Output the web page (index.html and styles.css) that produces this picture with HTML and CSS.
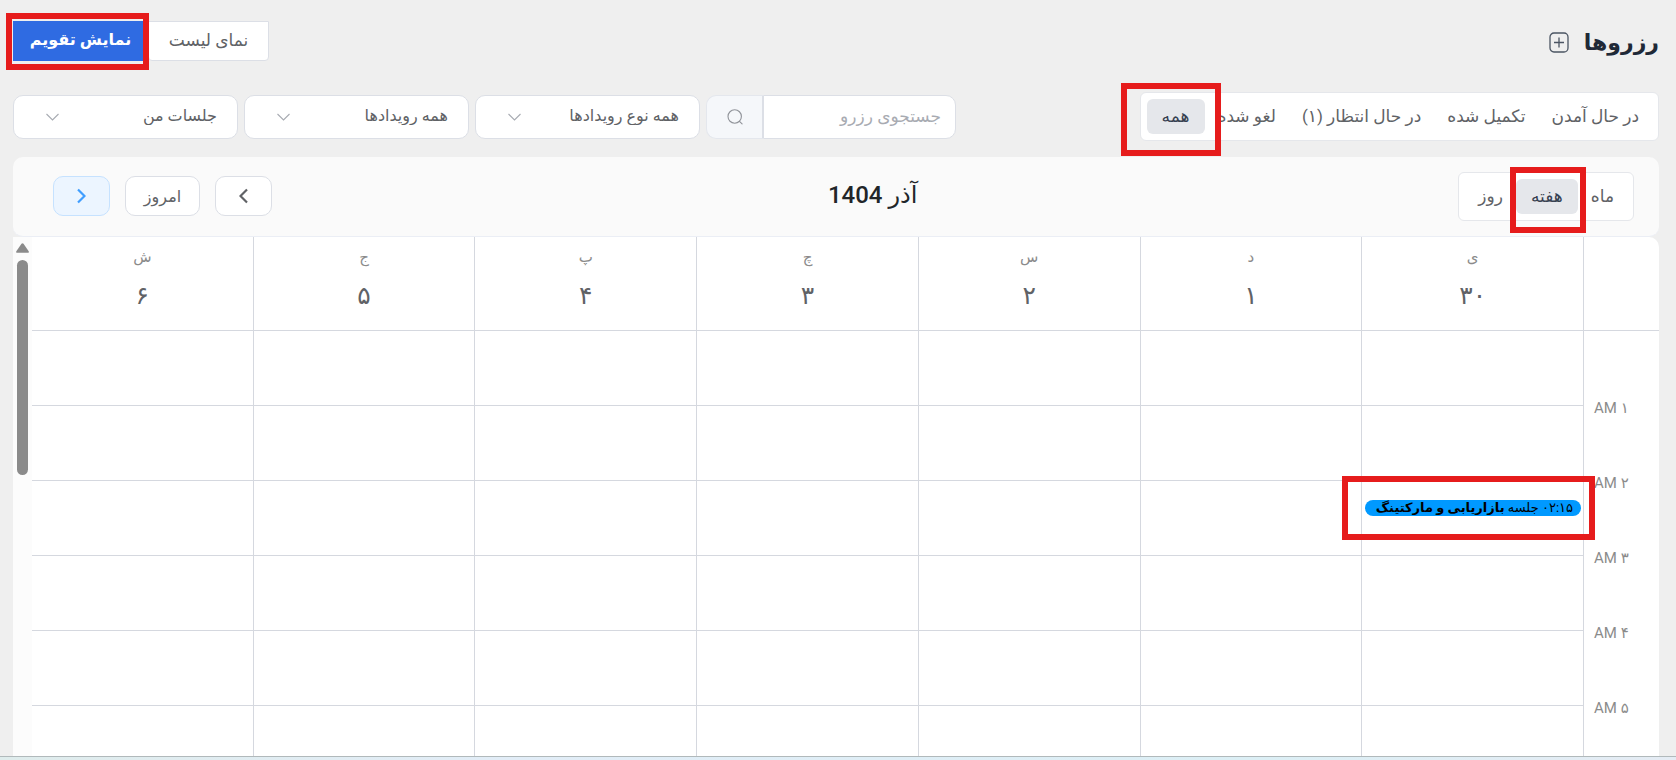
FILE: index.html
```html
<!DOCTYPE html>
<html lang="fa" dir="rtl">
<head>
    <meta charset="UTF-8">
    <meta name="viewport" content="width=device-width, initial-scale=1.0">
    <title>رزروها</title>
    <link rel="stylesheet" href="styles.css">
</head>
<body>
    <div class="page">
        <header class="page-header">
            <div class="page-title">
                <h1>رزروها</h1>
                <button class="add-button" aria-label="+">
                    <svg width="20" height="21" viewBox="0 0 20 21" fill="none">
                        <rect x="1" y="1" width="18" height="19" rx="4" stroke="#4b5563" stroke-width="1.3"/>
                        <path d="M10 5.5v10M5 10.5h10" stroke="#4b5563" stroke-width="1.3"/>
                    </svg>
                </button>
            </div>
            <div class="view-switch">
                <button class="view-button">نمای لیست</button>
                <div class="marked mark-view">
                    <button class="view-button primary">نمایش تقویم</button>
                </div>
            </div>
        </header>

        <div class="filters">
            <nav class="segment status-tabs">
                <button>در حال آمدن</button>
                <button>تکمیل شده</button>
                <button>در حال انتظار (۱)</button>
                <button>لغو شده</button>
                <div class="marked mark-status"><button class="active">همه</button></div>
            </nav>
            <div class="filter-fields">
                <div class="search">
                    <input type="text" placeholder="جستجوی رزرو" aria-label="جستجوی رزرو">
                    <button aria-label="جستجوی رزرو">
                        <svg width="16" height="16" viewBox="0 0 16 16" fill="none" stroke="#909399" stroke-width="1.1" stroke-linecap="round">
                            <circle cx="7.7" cy="7.5" r="6.7"/>
                            <path d="M12.5 12.3l2.6 2.6"/>
                        </svg>
                    </button>
                </div>
                <select aria-label="همه نوع رویدادها"><option>همه نوع رویدادها</option></select>
                <select aria-label="همه رویدادها"><option>همه رویدادها</option></select>
                <select aria-label="جلسات من"><option>جلسات من</option></select>
            </div>
        </div>

        <div class="calendar-bar">
            <div class="segment range-tabs">
                <button>ماه</button>
                <div class="marked mark-week"><button class="active">هفته</button></div>
                <button>روز</button>
            </div>
            <h2>آذر 1404</h2>
            <div class="calendar-nav">
                <button class="nav-arrow" aria-label="‹">
                    <svg width="9" height="16" viewBox="0 0 9 16" fill="none" stroke="#606266" stroke-width="2.2"><path d="M8 1.5L1.5 8L8 14.5"/></svg>
                </button>
                <button class="nav-today">امروز</button>
                <button class="nav-arrow next" aria-label="›">
                    <svg width="9" height="16" viewBox="0 0 9 16" fill="none" stroke="#409eff" stroke-width="2.2"><path d="M1 1.5L7.5 8L1 14.5"/></svg>
                </button>
            </div>
        </div>

        <main class="calendar">
            <div class="week">
                <div class="row days">
                    <div class="time"></div>
                    <div class="cell"><span>ی</span><b>۳۰</b></div>
                    <div class="cell"><span>د</span><b>۱</b></div>
                    <div class="cell"><span>س</span><b>۲</b></div>
                    <div class="cell"><span>چ</span><b>۳</b></div>
                    <div class="cell"><span>پ</span><b>۴</b></div>
                    <div class="cell"><span>ج</span><b>۵</b></div>
                    <div class="cell"><span>ش</span><b>۶</b></div>
                </div>
                <div class="row">
                    <div class="time"></div>
                    <div class="cell"></div><div class="cell"></div><div class="cell"></div><div class="cell"></div><div class="cell"></div><div class="cell"></div><div class="cell"></div>
                </div>
                <div class="row">
                    <div class="time">۱ AM</div>
                    <div class="cell"></div><div class="cell"></div><div class="cell"></div><div class="cell"></div><div class="cell"></div><div class="cell"></div><div class="cell"></div>
                </div>
                <div class="row">
                    <div class="time">۲ AM</div>
                    <div class="cell">
                        <div class="event-slot marked mark-event">
                            <div class="event"><span>۰۲:۱۵</span> <span>جلسه</span> <b>بازاریابی و مارکتینگ</b></div>
                        </div>
                    </div>
                    <div class="cell"></div><div class="cell"></div><div class="cell"></div><div class="cell"></div><div class="cell"></div><div class="cell"></div>
                </div>
                <div class="row">
                    <div class="time">۳ AM</div>
                    <div class="cell"></div><div class="cell"></div><div class="cell"></div><div class="cell"></div><div class="cell"></div><div class="cell"></div><div class="cell"></div>
                </div>
                <div class="row">
                    <div class="time">۴ AM</div>
                    <div class="cell"></div><div class="cell"></div><div class="cell"></div><div class="cell"></div><div class="cell"></div><div class="cell"></div><div class="cell"></div>
                </div>
                <div class="row">
                    <div class="time">۵ AM</div>
                    <div class="cell"></div><div class="cell"></div><div class="cell"></div><div class="cell"></div><div class="cell"></div><div class="cell"></div><div class="cell"></div>
                </div>
            </div>
            <div class="scrollbar">
                <svg width="13" height="10" viewBox="0 0 13 10" fill="#8b8b8b"><path d="M5.5.8q1-1.2 2 0l5.2 7.4q.6 1.6-1 1.6H1.3q-1.6 0-1-1.6z"/></svg>
                <div class="thumb"></div>
            </div>
        </main>
    </div>
    <div class="bottom-edge"></div>
</body>
</html>
```

FILE: styles.css
```css
* {
    box-sizing: border-box;
}
body {
    margin: 0;
    height: 100vh;
    display: flex;
    flex-direction: column;
    overflow: hidden;
    background: #efefef;
    color: #606266;
    font-family: Roboto, "DejaVu Sans", sans-serif;
    font-size: 16px;
}
h1, h2 {
    margin: 0;
}
button, input, select {
    font: inherit;
    color: inherit;
    margin: 0;
}
button {
    cursor: pointer;
    white-space: nowrap;
}
.page {
    flex: 1;
    min-height: 0;
    display: flex;
    flex-direction: column;
    padding: 21px 17px 0 13px;
}
.page-header {
    display: flex;
    justify-content: space-between;
    height: 40px;
    margin-bottom: 31px;
}
.page-title {
    display: flex;
    align-items: center;
    gap: 15px;
    padding-top: 3px;
}
.page-title h1 {
    font-size: 22px;
    line-height: 36px;
    color: #1f2937;
}
.add-button {
    display: flex;
    padding: 0;
    border: none;
    background: none;
}
.view-switch {
    display: flex;
}
.view-button {
    height: 40px;
    min-width: 121px;
    padding: 0 12px 3px;
    background: #fff;
    border: 1px solid #dcdfe6;
    border-radius: 0 0 4px 4px;
    font-size: 17px;
}
.view-button.primary {
    min-width: 135px;
    background: #2f6be2;
    border-color: #2f6be2;
    border-radius: 0;
    color: #fff;
    font-size: 16px;
    font-weight: 600;
}

/* red callout frames */
.marked {
    position: relative;
}
.marked::after {
    content: "";
    position: absolute;
    z-index: 2;
    border: 6px solid #e61c1c;
    pointer-events: none;
}
.mark-view::after {
    inset: -8px -1px -9px -7px;
}
.mark-status::after {
    inset: -16px -16px -22px -26px;
}
.mark-week::after {
    inset: -12px -8px -19px -6px;
}
.mark-event::after {
    inset: -24px -14px -24px -23px;
}

.filters {
    display: flex;
    justify-content: space-between;
    align-items: center;
    margin-bottom: 16px;
}
.segment {
    display: flex;
    padding: 6px;
    background: #fff;
    border: 1px solid #e5e7eb;
    border-radius: 6px;
}
.segment button {
    height: 35px;
    padding: 0 13px 2px;
    border: none;
    border-radius: 6px;
    background: none;
    font-size: 17px;
}
.segment button.active {
    padding: 0 15px 2px;
    background: #e5e7eb;
    color: #374151;
}
.filter-fields {
    display: flex;
    gap: 6px;
}
.search {
    display: flex;
    width: 250px;
    height: 44px;
}
.search input {
    flex: 1;
    min-width: 0;
    padding: 0 14px 2px;
    border: 1px solid #dcdfe6;
    border-radius: 0 10px 10px 0;
    background: #fff;
    font-size: 17px;
}
.search input::placeholder {
    color: #a8abb2;
    opacity: 1;
}
.search button {
    display: flex;
    align-items: center;
    justify-content: center;
    width: 57px;
    border: 1px solid #e4e7ed;
    border-right-color: #dcdfe6;
    border-radius: 10px 0 0 10px;
    background: #f5f7fa;
}
select {
    appearance: none;
    width: 225px;
    height: 44px;
    padding: 0 20px 2px;
    font-size: 16px;
    border: 1px solid #dcdfe6;
    border-radius: 10px;
    background: #fff url("data:image/svg+xml,%3Csvg xmlns='http://www.w3.org/2000/svg' width='13' height='8' fill='none' stroke='%23a8abb2' stroke-width='1.1'%3E%3Cpath d='M.5 1L6.5 7L12.5 1'/%3E%3C/svg%3E") no-repeat 32px center;
}

.calendar-bar {
    display: flex;
    align-items: center;
    justify-content: space-between;
    height: 80px;
    flex-shrink: 0;
    padding: 0 25px 0 40px;
    background: #fafafa;
    border-bottom: 1px solid #ebeef5;
    border-radius: 10px;
}
.calendar-bar h2 {
    padding-bottom: 3px;
    font-size: 24px;
    line-height: 32px;
    font-weight: 500;
    color: #212529;
}
.calendar-nav {
    display: flex;
    gap: 15px;
    margin-right: 15px;
    padding-bottom: 1px;
}
.calendar-nav button {
    height: 40px;
    border: 1px solid #dcdfe6;
    border-radius: 10px;
    background: #fff;
}
.nav-today {
    min-width: 75px;
}
.nav-arrow {
    display: flex;
    align-items: center;
    justify-content: center;
    width: 57px;
}
.calendar-nav .next {
    background: #ecf5ff;
    border-color: #c6e2ff;
}

.calendar {
    flex: 1;
    min-height: 0;
    display: flex;
    background: #fff;
    border-radius: 0 10px 0 0;
    overflow: hidden;
}
.week {
    flex: 1;
}
.row {
    display: flex;
    height: 75px;
}
.row.days {
    height: 94px;
    border-bottom: 1px solid #d5d8df;
}
.time {
    width: 75px;
    padding-left: 10px;
    text-align: left;
    font-size: 15px;
    line-height: 18px;
    margin-top: -7px;
    color: #8b8b8b;
}
.cell {
    flex: 1;
    position: relative;
    border-right: 1px solid #d5d8df;
    border-bottom: 1px solid #d5d8df;
}
.days .cell {
    display: flex;
    flex-direction: column;
    align-items: center;
    border-bottom: none;
    padding-top: 8px;
}
.days span {
    font-size: 15px;
    line-height: 24px;
    color: #8b8b8b;
}
.days b {
    font-size: 25px;
    line-height: 54px;
    font-weight: 400;
}
.event-slot {
    position: absolute;
    top: 19px;
    right: 2px;
    left: 3px;
}
.event {
    height: 16px;
    padding: 0 8px;
    overflow: hidden;
    white-space: nowrap;
    border-radius: 8px;
    background: #09f;
    color: #000;
    font-size: 13px;
    line-height: 16px;
}
.scrollbar {
    width: 19px;
    padding: 6px 0;
    display: flex;
    flex-direction: column;
    align-items: center;
    gap: 7px;
    background: #fcfcfc;
}
.thumb {
    width: 11px;
    height: 215px;
    border-radius: 6px;
    background: #8b8b8b;
}
.bottom-edge {
    height: 4px;
    flex-shrink: 0;
    border-top: 1px solid #b1b9bb;
    background: linear-gradient(to right, #dfecec, #e2edf7 30%, #dceff5 75%, #e5ecf4);
}
```
